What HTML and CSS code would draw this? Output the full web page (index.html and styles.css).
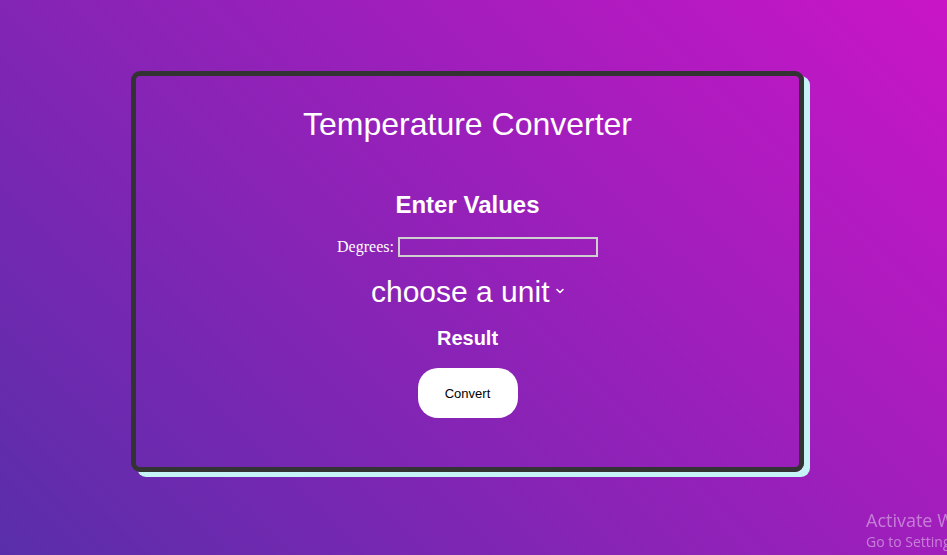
FILE: index.html
```html
<!DOCTYPE html>
<html lang="en">
<head>
<meta charset="utf-8">
<title>Temperature Converter</title>
<link rel="stylesheet" href="styles.css">
</head>
<body>
  <main class="card">
    <h1 class="title">Temperature Converter</h1>
    <h2 class="subtitle">Enter Values</h2>
    <div class="field">
      <label class="label" for="deg">Degrees:</label>
      <input class="input" id="deg" type="text">
    </div>
    <div class="unit">
      <select class="select">
        <option>choose a unit</option>
        <option>Celsius</option>
        <option>Fahrenheit</option>
        <option>Kelvin</option>
      </select>
      <svg class="chev" width="8" height="6" viewBox="0 0 8 6"><path d="M1 1.5 L4 4.5 L7 1.5" fill="none" stroke="#fff" stroke-width="1.6" stroke-linecap="round" stroke-linejoin="round"/></svg>
    </div>
    <h3 class="result">Result</h3>
    <button class="btn" type="button">Convert</button>
  </main>
  <div class="watermark">
    <div class="wm-title">Activate Windows</div>
    <div class="wm-sub">Go to Settings to activate Windows.</div>
  </div>
</body>
</html>
```

FILE: styles.css
```css
html, body {
  margin: 0;
  height: 100%;
}
body {
  overflow: hidden;
  background: linear-gradient(45deg, #592eaa 0%, #c915c6 100%);
  font-family: "Liberation Sans", Arial, sans-serif;
  color: #fff;
}
.card {
  box-sizing: border-box;
  width: 673px;
  margin: 71px 0 0 131px;
  border: 5px solid #333333;
  border-radius: 9px;
  box-shadow: 6px 5px 0 #c6f3f5;
  padding: 30px 0 49px;
  display: flex;
  flex-direction: column;
  align-items: center;
}
.title {
  margin: 0;
  font-size: 32px;
  line-height: 37px;
  font-weight: normal;
}
.subtitle {
  margin: 48px 0 0;
  font-size: 24px;
  line-height: 28px;
  font-weight: bold;
}
.field {
  margin-top: 18px;
  height: 20px;
  display: flex;
  align-items: center;
  gap: 4px;
}
.label {
  font-family: "Liberation Serif", "Times New Roman", serif;
  font-size: 16px;
}
.input {
  box-sizing: border-box;
  width: 200px;
  height: 20px;
  border: 2px solid #cfcfcf;
  background: transparent;
  padding: 0 4px;
  color: #fff;
  outline: none;
}
.unit {
  margin-top: 18px;
  display: flex;
  align-items: center;
  height: 34px;
}
.select {
  -webkit-appearance: none;
  appearance: none;
  background: transparent;
  border: none;
  color: #fff;
  font-family: "Liberation Sans", Arial, sans-serif;
  font-size: 30px;
  line-height: 34px;
  padding: 0;
  margin: 0;
  outline: none;
}
.select option {
  color: #000;
  font-size: 16px;
}
.chev {
  margin-left: 6px;
  margin-top: -2px;
}
.result {
  margin: 18px 0 0;
  font-size: 20px;
  line-height: 23px;
  font-weight: bold;
}
.btn {
  margin-top: 18px;
  width: 100px;
  height: 50px;
  border: none;
  border-radius: 20px;
  background: #fff;
  color: #000;
  font-family: "Liberation Sans", Arial, sans-serif;
  font-size: 13px;
  cursor: pointer;
}
.watermark {
  position: fixed;
  left: 866px;
  top: 507px;
  white-space: nowrap;
  font-family: "Open Sans", "Noto Sans", sans-serif;
  color: rgba(255, 255, 255, 0.42);
}
.wm-title {
  font-size: 18px;
  line-height: 26px;
}
.wm-sub {
  font-size: 14px;
  line-height: 18px;
}
```
